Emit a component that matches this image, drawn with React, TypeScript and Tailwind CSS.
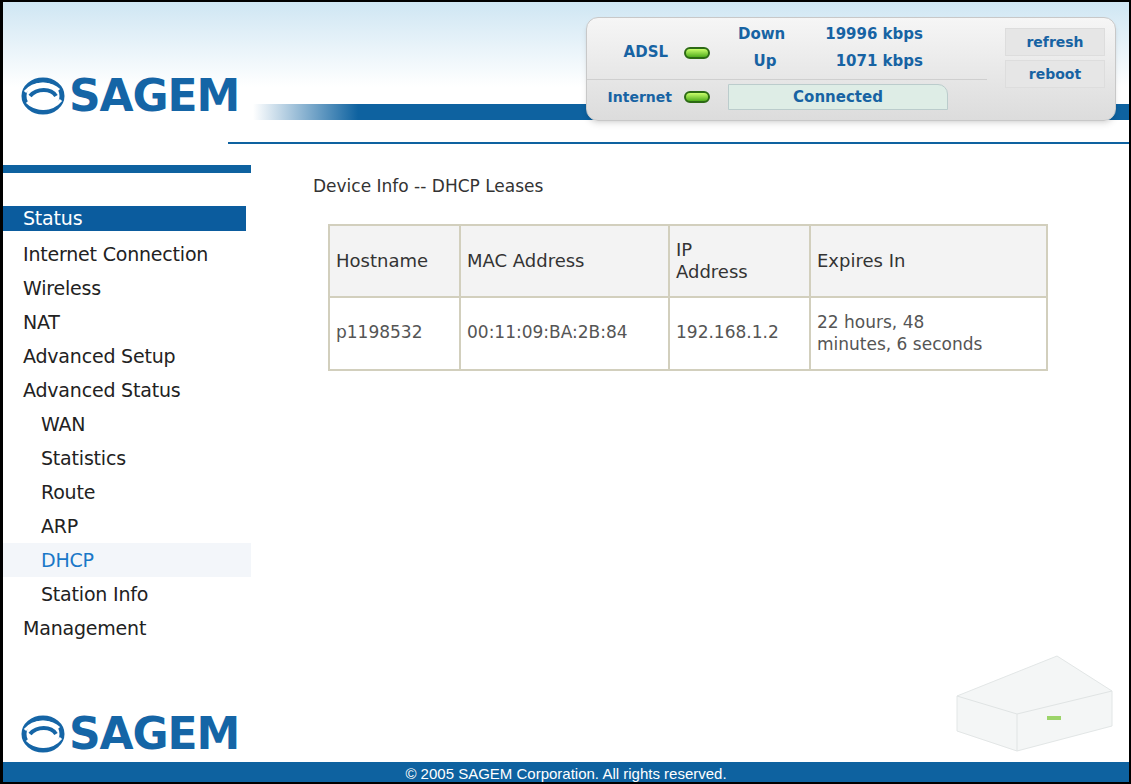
import React from 'react';

const Logo = () => (
  <div className="flex items-center gap-1">
    <svg width={44} height={40} viewBox="0 0 44 40">
      <ellipse cx="22" cy="20" rx="19" ry="16" fill="none" stroke="#1565a6" strokeWidth="5" />
      <path d="M4 16 C14 4 32 8 38 14" fill="none" stroke="#fff" strokeWidth="3" />
      <path d="M6 26 C14 34 30 36 40 24" fill="none" stroke="#fff" strokeWidth="3" />
      <path d="M9 20 C16 12 30 12 35 20" fill="none" stroke="#1565a6" strokeWidth="4" />
    </svg>
    <span className="text-[44px] font-bold tracking-tight text-[#1565a6] leading-none" style={{ fontFamily: '"DejaVu Sans", sans-serif' }}>
      SAGEM
    </span>
  </div>
);

const Led = () => (
  <span className="inline-block w-[26px] h-[12px] rounded-full bg-gradient-to-b from-[#c8ff6a] to-[#4fae1a] border-2 border-[#2c6a14]" />
);

const menu: [string, boolean][] = [
  ['Internet Connection', false],
  ['Wireless', false],
  ['NAT', false],
  ['Advanced Setup', false],
  ['Advanced Status', false],
  ['WAN', true],
  ['Statistics', true],
  ['Route', true],
  ['ARP', true],
];

export default function App() {
  const font = { fontFamily: '"DejaVu Sans", sans-serif' };
  return (
    <div className="w-[1131px] h-[784px] bg-white border-2 border-l-[3px] border-black flex flex-col overflow-hidden text-[#222]" style={font}>
      {/* header */}
      <div className="relative h-[170px] bg-gradient-to-b from-[#cfe6f3] via-white to-white">
        <div className="absolute left-[18px] top-[72px]"><Logo /></div>
        <div className="absolute left-[250px] right-0 top-[102px] h-[16px]" style={{ backgroundImage: 'linear-gradient(to right, #fff, #0e62a0 12%, #0e62a0)' }} />
        <div className="absolute left-[225px] right-0 top-[140px] h-[2px] bg-[#0e62a0]" />
        <div className="absolute left-0 w-[248px] top-[163px] h-[8px] bg-[#0e62a0]" />
        {/* status panel */}
        <div className="absolute left-[583px] top-[15px] w-[530px] h-[104px] rounded-[12px] bg-gradient-to-b from-[#f6f6f6] to-[#dcdcdc] border border-[#c8c8c8] shadow-md flex text-[#1763a3] font-bold text-[15px]">
          <div className="w-[400px] flex flex-col">
            <div className="flex h-[62px] border-b border-[#cfcfcf]">
              <div className="w-[135px] flex items-center justify-end gap-4 pr-3 pt-2"><span>ADSL</span><Led /></div>
              <div className="flex-1 grid grid-cols-[70px_1fr] px-4 py-1 text-[15px] leading-[24px]">
                <span>Down</span><span className="text-right pr-12">19996 kbps</span>
                <span className="text-center pr-4">Up</span><span className="text-right pr-12">1071 kbps</span>
              </div>
            </div>
            <div className="flex items-center h-[34px]">
              <div className="w-[135px] flex items-center justify-end gap-3 pr-3 text-[14px]"><span>Internet</span><Led /></div>
              <div className="ml-[6px] w-[220px] h-[26px] rounded-tr-[10px] bg-[#deede6] border border-[#bcc] flex items-center justify-center">Connected</div>
            </div>
          </div>
          <div className="flex-1 flex flex-col gap-1 p-[10px] pl-[18px]">
            <div className="h-[28px] bg-[#e6e6e6] border border-[#ddd] flex items-center justify-center text-[14px]">refresh</div>
            <div className="h-[28px] bg-[#e6e6e6] border border-[#ddd] flex items-center justify-center text-[14px]">reboot</div>
          </div>
        </div>
      </div>

      <div className="flex flex-1">
        {/* sidebar */}
        <div className="w-[248px] flex flex-col pt-[34px] text-[19px] tracking-[-0.2px]">
          <div className="bg-[#0b5c9e] text-white h-[25px] leading-[25px] pl-[20px] w-[243px] mb-[6px]">Status</div>
          {menu.map(([t, sub]) => (
            <div key={t} className={`h-[34px] leading-[34px] ${sub ? 'pl-[38px]' : 'pl-[20px]'}`}>{t}</div>
          ))}
          <div className="h-[34px] leading-[34px] pl-[38px] bg-[#f3f6fa] text-[#1a78c8]">DHCP</div>
          <div className="h-[34px] leading-[34px] pl-[38px]">Station Info</div>
          <div className="h-[34px] leading-[34px] pl-[20px]">Management</div>
          <div className="mt-auto pl-[18px] pb-[6px]"><Logo /></div>
        </div>
        {/* content */}
        <div className="flex-1 relative pl-[62px] pt-[2px]">
          <div className="text-[17px] text-[#333]">Device Info -- DHCP Leases</div>
          <table className="mt-[24px] ml-[15px] border-collapse border-2 border-[#d2cfbd] text-[18px] text-[#333]">
            <tbody>
              <tr className="bg-[#f3f3f3] h-[72px]">
                <td className="border-2 border-[#d2cfbd] px-[6px] w-[131px]">Hostname</td>
                <td className="border-2 border-[#d2cfbd] px-[6px] w-[209px]">MAC Address</td>
                <td className="border-2 border-[#d2cfbd] px-[6px] w-[141px] leading-[22px]">IP<br />Address</td>
                <td className="border-2 border-[#d2cfbd] px-[6px] w-[237px]">Expires In</td>
              </tr>
              <tr className="h-[73px] text-[#555] text-[17px]">
                <td className="border-2 border-[#d2cfbd] px-[6px]">p1198532</td>
                <td className="border-2 border-[#d2cfbd] px-[6px]">00:11:09:BA:2B:84</td>
                <td className="border-2 border-[#d2cfbd] px-[6px]">192.168.1.2</td>
                <td className="border-2 border-[#d2cfbd] px-[6px] leading-[22px]">22 hours, 48<br />minutes, 6 seconds</td>
              </tr>
            </tbody>
          </table>
          <svg className="absolute right-[12px] bottom-[6px]" width="170" height="120" viewBox="0 0 170 120">
            <path d="M10 60 L110 20 L165 55 L165 90 L70 115 L10 95Z" fill="#f4f6f6" stroke="#e2e6e6" />
            <path d="M10 60 L70 78 L165 55" fill="none" stroke="#e0e4e4" />
            <path d="M70 78 L70 115" stroke="#e0e4e4" />
            <rect x="100" y="80" width="14" height="4" fill="#9cd46a" />
          </svg>
        </div>
      </div>
      <div className="h-[20px] bg-[#0e62a0] text-white text-center text-[15px] leading-[24px]" style={{ fontFamily: '"Liberation Sans Narrow", "Liberation Sans", sans-serif' }}>
        © 2005 SAGEM Corporation. All rights reserved.
      </div>
    </div>
  );
}
